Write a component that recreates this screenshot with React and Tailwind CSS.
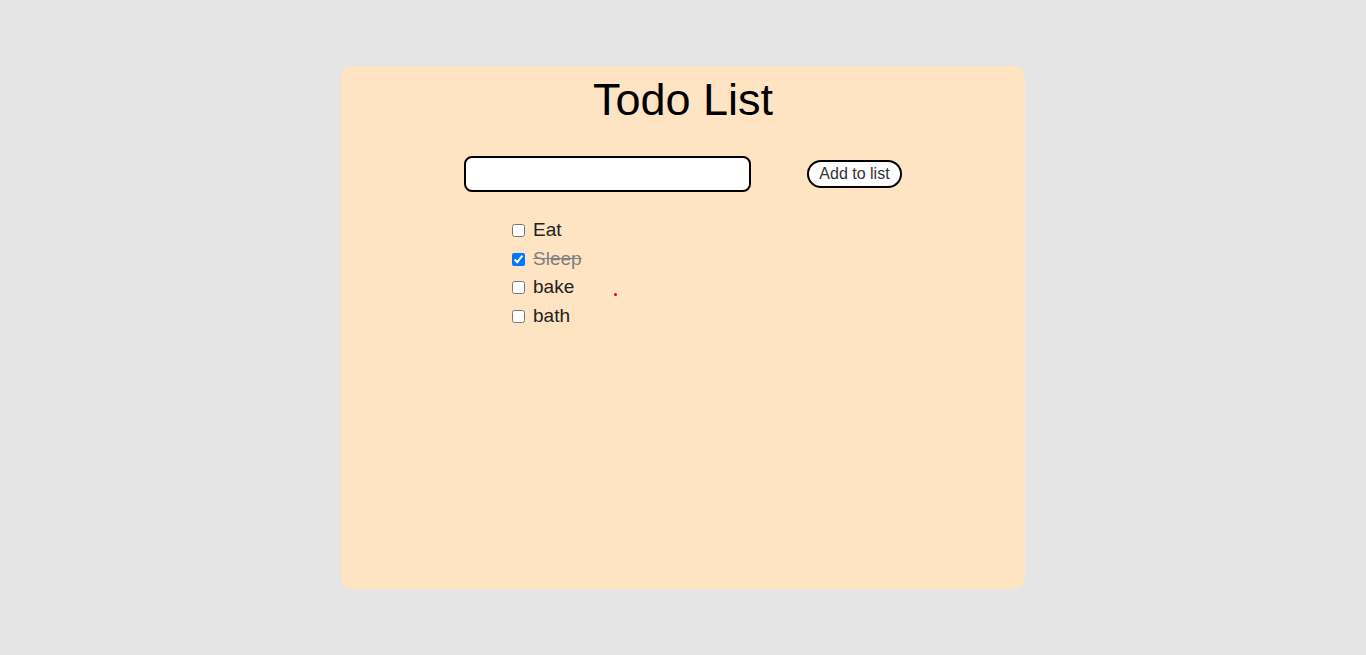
import React, { useState } from "react";

export default function App() {
  const [todos, setTodos] = useState([
    { text: "Eat", done: false },
    { text: "Sleep", done: true },
    { text: "bake", done: false },
    { text: "bath", done: false },
  ]);
  const [value, setValue] = useState("");

  function add() {
    if (!value.trim()) return;
    setTodos([...todos, { text: value, done: false }]);
    setValue("");
  }

  function toggle(i) {
    setTodos(todos.map((t, j) => (j === i ? { ...t, done: !t.done } : t)));
  }

  return (
    <div className="min-h-screen bg-[#e5e5e5] pt-[66px] font-['Liberation_Sans',Arial,sans-serif]">
      <div className="relative mx-auto w-[684px] h-[523px] rounded-[10px] bg-[#ffe4c4]">
        <h1 className="pt-[8px] text-center text-[45px] leading-[52px] text-black">Todo List</h1>
        <div className="mt-[30px] flex items-center justify-center gap-[56px]">
          <input
            className="w-[287px] h-[36px] rounded-[8px] border-2 border-black bg-white px-2 outline-none"
            value={value}
            onChange={(e) => setValue(e.target.value)}
          />
          <button
            onClick={add}
            className="h-[28px] w-[95px] rounded-full border-2 border-black bg-white text-[16px] text-[#333]"
          >
            Add to list
          </button>
        </div>
        <ul className="mt-[24px] ml-[171px] flex flex-col">
          {todos.map((t, i) => (
            <li key={i} className="flex items-center h-[28.7px] text-[19px]">
              <input
                type="checkbox"
                checked={t.done}
                onChange={() => toggle(i)}
                className="m-0 w-[13px] h-[13px]"
              />
              <span className={"ml-[8px] " + (t.done ? "line-through text-[#808080]" : "text-[#222]")}>
                {t.text}
              </span>
            </li>
          ))}
        </ul>
        <div className="absolute left-[273px] top-[227px] w-[3px] h-[3px] rounded-full bg-red-600"></div>
      </div>
    </div>
  );
}
